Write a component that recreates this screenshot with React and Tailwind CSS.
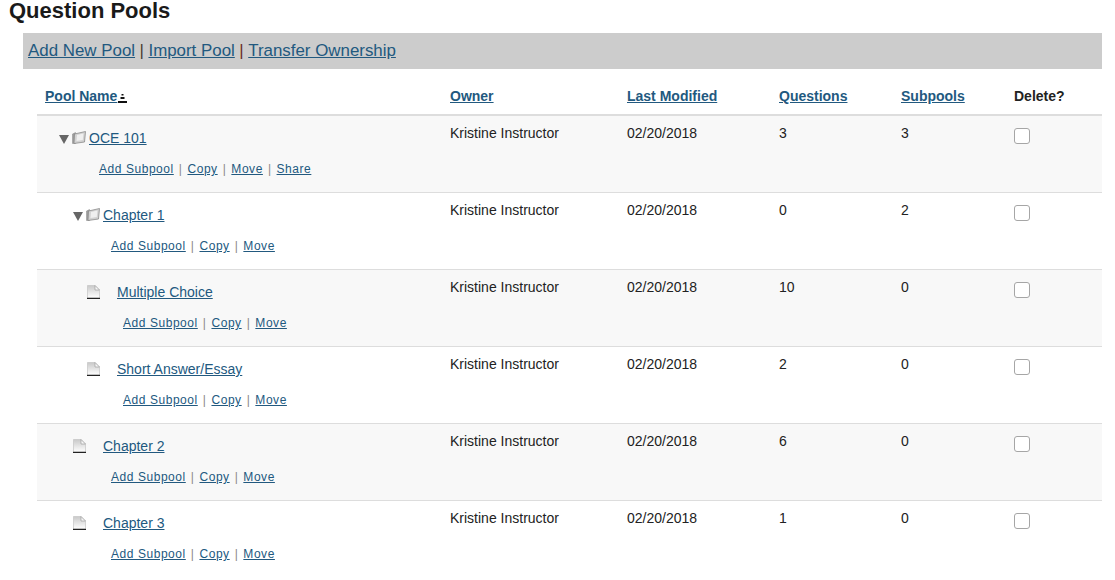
const pools = [
  { name: "OCE 101", questions: 3, subpools: 3, level: 0, open: true, share: true, shade: true },
  { name: "Chapter 1", questions: 0, subpools: 2, level: 1, open: true },
  { name: "Multiple Choice", questions: 10, subpools: 0, level: 2, shade: true },
  { name: "Short Answer/Essay", questions: 2, subpools: 0, level: 2 },
  { name: "Chapter 2", questions: 6, subpools: 0, level: 1, shade: true },
  { name: "Chapter 3", questions: 1, subpools: 0, level: 1, last: true },
];

const linkClass = "text-[#22597f] underline";

function Triangle() {
  return (
    <svg width="10" height="9" viewBox="0 0 10 9" className="shrink-0 mt-[6px]">
      <path d="M0 0h10L5 9z" fill="#666" />
    </svg>
  );
}

function FolderIcon() {
  return (
    <svg width="14" height="13" viewBox="0 0 14 13" className="shrink-0 mt-[2px]">
      <path d="M.5 3 3.500 1.500V12.500H.5z" fill="#9c9c9c" stroke="#8a8a8a" strokeWidth=".5" />
      <path d="M2.500 3 13.500 .5 12.500 11 2 12.500z" fill="#d2d2d2" stroke="#8a8a8a" strokeWidth=".8" />
      <path d="M5 4 11.500 2.500 10.800 9 4.500 10z" fill="#efefef" />
    </svg>
  );
}

function FileIcon() {
  return (
    <svg width="13" height="14" viewBox="0 0 13 14" className="shrink-0 mt-[2px]">
      <defs>
        <linearGradient id="page" x1="0" y1="0" x2="0" y2="1">
          <stop offset="0" stopColor="#c9c9c9" />
          <stop offset="1" stopColor="#ffffff" />
        </linearGradient>
      </defs>
      <path d="M.5 .5h7.500L12.500 5V13H.5z" fill="url(#page)" stroke="#c4c4c4" strokeWidth=".7" />
      <path d="M8 .5V5H12.500z" fill="#f6f6f6" stroke="#a0a0a0" strokeWidth=".7" />
      <path d="M0 13.400h13" stroke="#222" strokeWidth="1.200" />
    </svg>
  );
}

// indent of the icon and the action links per tree level
const levels = {
  0: { head: "pl-[14px]", actions: "pl-[54px]" },
  1: { head: "pl-[28px]", actions: "pl-[66px]" },
  2: { head: "pl-[42px]", actions: "pl-[78px]" },
};

function PoolRow({ pool }) {
  const indent = levels[pool.level];
  const actions = pool.share
    ? ["Add Subpool", "Copy", "Move", "Share"]
    : ["Add Subpool", "Copy", "Move"];
  return (
    <div
      className={`grid grid-cols-[413px_177px_152px_122px_113px_88px] h-[77px] ${
        pool.last ? "" : "border-b border-[#dddddd]"
      } ${pool.shade ? "bg-[#f8f8f8]" : "bg-white"}`}
    >
      <div className="pl-2 pt-[13px]">
        <div className={`flex items-start h-[18px] ${indent.head}`}>
          <div className="flex items-start shrink-0 w-[30px] gap-[3px]">
            {pool.open ? (
              <>
                <Triangle />
                <FolderIcon />
              </>
            ) : (
              <FileIcon />
            )}
          </div>
          <a className={`text-[14px] leading-[18px] ${linkClass}`}>{pool.name}</a>
        </div>
        <div className={`flex items-center mt-[13px] text-[12px] tracking-[0.55px] ${indent.actions}`}>
          {actions.map((label, i) => (
            <span key={label} className="flex items-center">
              {i > 0 && <span className="text-[#8a8a8a] px-[5px]">|</span>}
              <a className={linkClass}>{label}</a>
            </span>
          ))}
        </div>
      </div>
      <div className="pt-[8px]">Kristine Instructor</div>
      <div className="pt-[8px]">02/20/2018</div>
      <div className="pt-[8px]">{pool.questions}</div>
      <div className="pt-[8px]">{pool.subpools}</div>
      <div className="pt-[12px]">
        <input
          type="checkbox"
          aria-label={`Delete ${pool.name}`}
          className="block appearance-none w-4 h-4 bg-white border border-[#a6a6a6] rounded-[3px]"
        />
      </div>
    </div>
  );
}

export default function App() {
  const headers = [
    ["Owner", true],
    ["Last Modified", true],
    ["Questions", true],
    ["Subpools", true],
    ["Delete?", false],
  ];

  return (
    <div
      className="h-[580px] w-[1115px] overflow-hidden bg-white text-[14px] leading-[18px] text-[#222222]"
      style={{ fontFamily: '"Liberation Sans", Arial, sans-serif' }}
    >
      <h1 className="pl-[9px] h-[33px] text-[22px] leading-[22px] font-bold text-[#1a1a1a]">
        Question Pools
      </h1>

      <div className="ml-[23px] w-[1079px] h-9 flex items-center pl-[5px] bg-[#cccccc] text-[16.9px]">
        <a className={linkClass}>Add New Pool</a>
        <span className="px-[4.5px] text-[#4a3a30]">|</span>
        <a className={linkClass}>Import Pool</a>
        <span className="px-[4.5px] text-[#6b2a1e]">|</span>
        <a className={linkClass}>Transfer Ownership</a>
      </div>

      <div className="ml-[37px] w-[1065px]">
        <div className="grid grid-cols-[413px_177px_152px_122px_113px_88px] h-[47px] items-end pb-[9px] border-b-2 border-[#dddddd] font-bold text-[14px]">
          <div className="pl-2 flex items-end">
            <a className={linkClass}>Pool Name</a>
            <svg width="10" height="9" viewBox="0 0 10 9" className="mb-[2px]">
              <path d="M4.500 0h2v1.500h-2z M3.500 3h4v2h-4z M1 7h9v2H1z" fill="#111" />
            </svg>
          </div>
          {headers.map(([label, linked]) =>
            linked ? (
              <div key={label}>
                <a className={linkClass}>{label}</a>
              </div>
            ) : (
              <div key={label}>{label}</div>
            ),
          )}
        </div>

        {pools.map((pool) => (
          <PoolRow key={pool.name} pool={pool} />
        ))}
      </div>
    </div>
  );
}
